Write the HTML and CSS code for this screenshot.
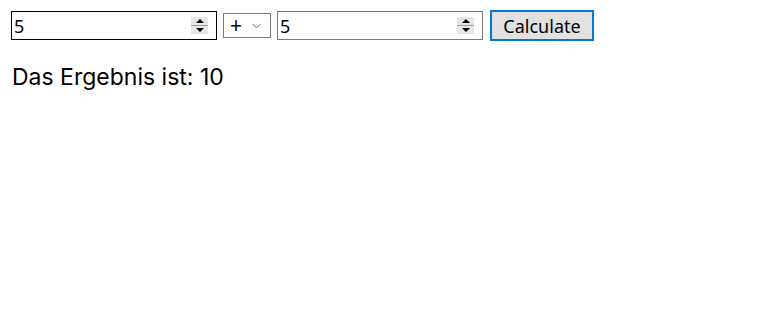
FILE: index.html
```html
<!DOCTYPE html>
<html lang="de">
<head>
  <meta charset="UTF-8" />
  <meta name="viewport" content="width=device-width, initial-scale=1" />
  <title>Rechner</title>
  <link rel="stylesheet" href="styles.css">
</head>
<body>
  <div class="calc-row">
    <!-- erste Zahl -->
    <div class="num-field num-active">
      <input type="text" class="num-input" value="5" />
      <div class="spin">
        <span class="spin-up"></span>
        <span class="spin-down"></span>
      </div>
    </div>

    <!-- Operator -->
    <div class="op-select">
      <span class="op-value">+</span>
      <svg class="op-chevron" width="9" height="6" viewBox="0 0 9 6">
        <path d="M0.5 1 L4.5 5 L8.5 1" fill="none" stroke="#6d6d6d" stroke-width="1" />
      </svg>
    </div>

    <!-- zweite Zahl -->
    <div class="num-field">
      <input type="text" class="num-input" value="5" />
      <div class="spin">
        <span class="spin-up"></span>
        <span class="spin-down"></span>
      </div>
    </div>

    <button class="btn-calc">Calculate</button>
  </div>

  <p class="result">Das Ergebnis ist: 10</p>
</body>
</html>
```

FILE: styles.css
```css
/* ===== Allgemein ===== */
body {
  margin: 0;
  padding: 10px 11px;
  background: #fff;
  color: #000;
  font-family: "Noto Sans", "Open Sans", sans-serif;
}

/* ===== Eingabezeile ===== */
.calc-row {
  display: flex;
  align-items: center;
  gap: 6px;
  height: 31px;
}

.num-field {
  display: flex;
  align-items: center;
  width: 204px;
  height: 27px;
  border: 1px solid #7a7a7a;
  background: #fff;
}
.num-active {
  border-color: #000;
}
.num-input {
  flex: 1;
  min-width: 0;
  border: none;
  outline: none;
  padding: 0 0 0 2px;
  font-family: "Noto Sans", "Open Sans", sans-serif;
  font-size: 18px;
  color: #000;
  background: transparent;
}

/* Pfeile wie bei input[type=number] */
.spin {
  display: flex;
  flex-direction: column;
  width: 17px;
  height: 17px;
  margin-right: 8px;
  background: #e6e6e6;
}
.spin span {
  flex: 1;
  display: flex;
  align-items: center;
  justify-content: center;
}
.spin-up {
  border-bottom: 1px solid #a0a0a0;
}
.spin-up::before {
  content: "";
  border-left: 4px solid transparent;
  border-right: 4px solid transparent;
  border-bottom: 4px solid #000;
}
.spin-down::before {
  content: "";
  border-left: 4px solid transparent;
  border-right: 4px solid transparent;
  border-top: 4px solid #000;
}

/* ===== Operator ===== */
.op-select {
  display: flex;
  align-items: center;
  gap: 10px;
  width: 46px;
  height: 23px;
  border: 1px solid #7a7a7a;
  padding: 0;
}
.op-value {
  margin-left: 6px;
  font-size: 21px;
  line-height: 1;
}
.op-chevron {
  margin-top: 1px;
}

/* ===== Button ===== */
.btn-calc {
  margin-left: 1px;
  width: 104px;
  height: 31px;
  border: 2px solid #0078d7;
  background: #e1e1e1;
  font-family: "Noto Sans", "Open Sans", sans-serif;
  font-size: 18px;
  color: #000;
  padding: 0;
  cursor: pointer;
}

/* ===== Ergebnis ===== */
.result {
  margin: 23px 0 0 1px;
  font-family: Inter, "Noto Sans", sans-serif;
  font-size: 23px;
  line-height: 26px;
}
```
